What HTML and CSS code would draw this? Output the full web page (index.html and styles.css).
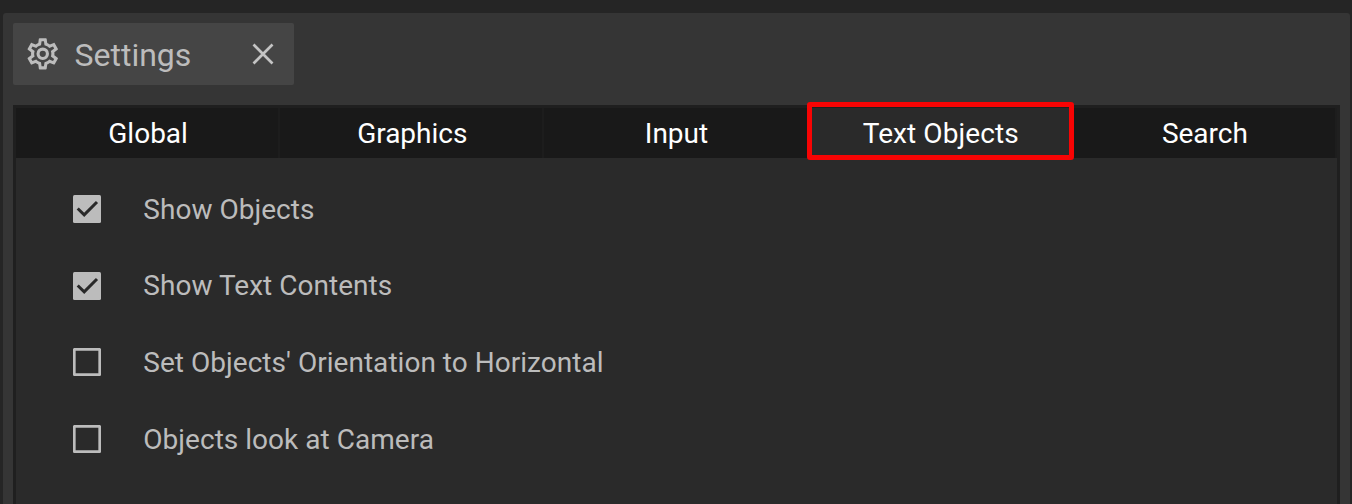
FILE: index.html
```html
<!DOCTYPE html>
<html lang="en">
<head>
<meta charset="utf-8">
<title>Settings</title>
<link rel="stylesheet" href="styles.css">
</head>
<body>
<main class="window">
  <header class="window-tab">
    <svg class="gear" viewBox="0 0 24 24"><path d="M12,8A4,4 0 0,1 16,12A4,4 0 0,1 12,16A4,4 0 0,1 8,12A4,4 0 0,1 12,8M12,10A2,2 0 0,0 10,12A2,2 0 0,0 12,14A2,2 0 0,0 14,12A2,2 0 0,0 12,10M10,22C9.75,22 9.54,21.82 9.5,21.58L9.13,18.93C8.5,18.68 7.96,18.34 7.44,17.94L4.95,18.95C4.73,19.03 4.46,18.95 4.34,18.73L2.34,15.27C2.21,15.05 2.27,14.78 2.46,14.63L4.57,12.97L4.5,12L4.57,11L2.46,9.37C2.27,9.22 2.21,8.95 2.34,8.73L4.34,5.27C4.46,5.05 4.73,4.96 4.95,5.05L7.44,6.05C7.96,5.66 8.5,5.32 9.13,5.07L9.5,2.42C9.54,2.18 9.75,2 10,2H14C14.25,2 14.46,2.18 14.5,2.42L14.87,5.07C15.5,5.32 16.04,5.66 16.56,6.05L19.05,5.05C19.27,4.96 19.54,5.05 19.66,5.27L21.66,8.73C21.79,8.95 21.73,9.22 21.54,9.37L19.43,11L19.5,12L19.43,13L21.54,14.63C21.73,14.78 21.79,15.05 21.66,15.27L19.66,18.73C19.54,18.95 19.27,19.04 19.05,18.95L16.56,17.95C16.04,18.34 15.5,18.68 14.87,18.93L14.5,21.58C14.46,21.82 14.25,22 14,22H10M11.25,4L10.88,6.61C9.68,6.86 8.62,7.5 7.85,8.39L5.44,7.35L4.69,8.65L6.8,10.2C6.4,11.37 6.4,12.64 6.8,13.8L4.68,15.36L5.43,16.66L7.86,15.62C8.63,16.5 9.68,17.14 10.87,17.38L11.24,20H12.76L13.13,17.39C14.32,17.14 15.37,16.5 16.14,15.62L18.57,16.66L19.32,15.36L17.2,13.81C17.6,12.64 17.6,11.37 17.2,10.2L19.31,8.65L18.56,7.35L16.15,8.39C15.38,7.5 14.32,6.86 13.12,6.62L12.75,4H11.25Z"/></svg>
    <h1 class="title">Settings</h1>
    <svg class="close" viewBox="0 0 22 22"><path d="M1.5 1.5 20.5 20.5M20.5 1.5 1.5 20.5"/></svg>
  </header>
  <section class="panel">
    <nav class="tabs">
      <div class="tab">Global</div>
      <div class="tab">Graphics</div>
      <div class="tab">Input</div>
      <div class="tab active">Text Objects</div>
      <div class="tab">Search</div>
    </nav>
    <div class="options">
      <div class="option"><svg class="box" viewBox="0 0 28 28"><rect class="fill" width="28" height="28" rx="1.5"/><path class="check" d="M4.7 13.5 11.2 19.8 24 7"/></svg><span>Show Objects</span></div>
      <div class="option"><svg class="box" viewBox="0 0 28 28"><rect class="fill" width="28" height="28" rx="1.5"/><path class="check" d="M4.7 13.5 11.2 19.8 24 7"/></svg><span>Show Text Contents</span></div>
      <div class="option"><svg class="box" viewBox="0 0 28 28"><rect class="outline" x="1.25" y="1.25" width="25.5" height="25.5" rx=".8"/></svg><span>Set Objects' Orientation to Horizontal</span></div>
      <div class="option"><svg class="box" viewBox="0 0 28 28"><rect class="outline" x="1.25" y="1.25" width="25.5" height="25.5" rx=".8"/></svg><span>Objects look at Camera</span></div>
    </div>
  </section>
</main>
</body>
</html>
```
FILE: styles.css
```css
* { box-sizing: border-box; }
body {
  margin: 0;
  height: 504px;
  overflow: hidden;
  padding: 13px 2px 0 3px;
  background: #252525;
  color: #bcbcbc;
  font-family: Roboto, sans-serif;
}
.window {
  height: 491px;
  padding: 10px 10px 0;
  background: #353535;
  border-radius: 3px 3px 0 0;
  display: flex;
  flex-direction: column;
}
.window-tab {
  width: 281px;
  height: 62px;
  flex: none;
  padding: 0 20px 0 11px;
  margin-bottom: 20px;
  border-radius: 2px;
  background: #454545;
  display: flex;
  align-items: center;
}
.gear { width: 37.5px; height: 37.5px; fill: #bcbcbc; }
.title {
  margin: 1px 0 0 13px;
  font-size: 32px;
  line-height: 38px;
  font-weight: 400;
}
.close {
  width: 22px;
  height: 22px;
  margin-left: auto;
  fill: none;
  stroke: #c4c4c4;
  stroke-width: 2.7;
}
.panel {
  flex: 1;
  border: solid #1f1f1f;
  border-width: 3px 3px 0;
  background: #2a2a2a;
}
.tabs {
  display: grid;
  grid-template-columns: repeat(5, 1fr);
  height: 50px;
}
.tab {
  padding-left: 2px;
  background: #191919;
  border-right: 2px solid #1d1d1d;
  color: #fff;
  font-size: 28px;
  line-height: 51px;
  height: 50px;
  text-align: center;
}
.active {
  position: relative;
  z-index: 1;
  padding: 0;
  border: 0;
  background: #2a2a2a;
  letter-spacing: .08px;
}
.active::after {
  content: "";
  position: absolute;
  inset: -6px -1px -2px -2px;
  border: 5px solid #f80404;
  border-radius: 3px;
}
.options {
  padding: 13px 0 0 57px;
}
.option {
  height: 76.6px;
  display: flex;
  align-items: center;
  gap: 42.3px;
  font-size: 28px;
  letter-spacing: .03px;
}
.box { width: 28px; height: 28px; flex: none; }
.fill { fill: #bcbcbc; }
.check { fill: none; stroke: #292929; stroke-width: 3; }
.outline { fill: none; stroke: #bcbcbc; stroke-width: 2.8; }
```
